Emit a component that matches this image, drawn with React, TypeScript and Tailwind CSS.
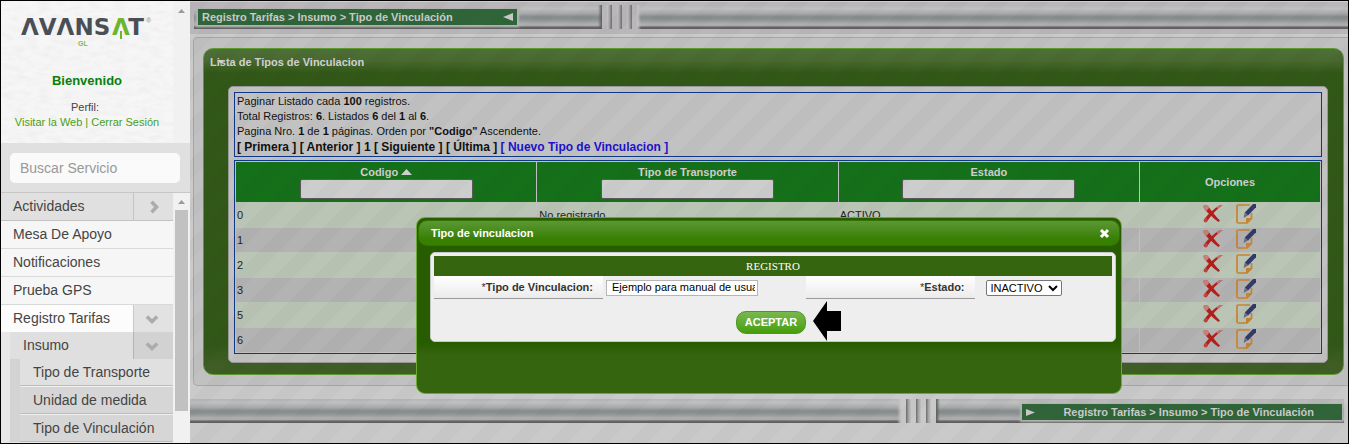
import { useState } from "react";

const CRUMB = "Registro Tarifas > Insumo > Tipo de Vinculación";

const ROWS = [
  { code: "0", name: "No registrado", state: "ACTIVO" },
  { code: "1", name: "", state: "" },
  { code: "2", name: "", state: "" },
  { code: "3", name: "", state: "" },
  { code: "5", name: "", state: "" },
  { code: "6", name: "", state: "" },
];

const METAL =
  "bg-[linear-gradient(to_bottom,#b6b6b8_0%,#c0c0c0_15%,#a8a9aa_35%,#868b8c_50%,#8f9394_62%,#adadad_78%,#b0b0b0_85%,#6a6a6a_92%,#5c5c5c_100%)]";

function Logo() {
  return (
    <svg className="overflow-visible" width="136" height="44" viewBox="0 0 136 44" role="img" aria-label="Avansat GL">
      <g fontFamily="'DejaVu Sans', Inter, sans-serif" fontSize="23" fontWeight="700">
        <text x="2" y="30" fill="#4a4f57">
          ΛVΛNS
        </text>
        <text x="102" y="30" textAnchor="middle" fill="#6cb52d">
          Λ
        </text>
        <text x="117" y="30" textAnchor="middle" fill="#4a4f57">
          T
        </text>
      </g>
      <rect x="101" y="26" width="2" height="8" fill="#6cb52d" />
      <text x="127" y="18" fontSize="7" fontWeight="700" fontFamily="'Liberation Sans', sans-serif" fill="#a5a5a5">
        ®
      </text>
      <text x="59" y="41" fontSize="7" fontWeight="700" fontFamily="'Liberation Sans', sans-serif" fill="#7dbd45">
        GL
      </text>
    </svg>
  );
}

function ScrollArrow() {
  return (
    <svg width="7" height="4" viewBox="0 0 7 4" aria-hidden="true">
      <path d="M3.5 0 7 4H0z" fill="#9a9a9a" />
    </svg>
  );
}

function Chevron({ down = false }: { down?: boolean }) {
  return (
    <svg width="14" height="14" viewBox="0 0 14 14" aria-hidden="true">
      <path
        d={down ? "M1.8 4.5 7 9.5l5.200-5" : "M4.500 1.800 9.500 7l-5 5.200"}
        fill="none"
        stroke="#acacac"
        strokeWidth="3.600"
      />
    </svg>
  );
}

function DeleteIcon() {
  return (
    <svg width="20" height="20" viewBox="0 0 20 20" aria-hidden="true">
      <path d="M.5 2.500C1 .8 3.500.6 4.800 2c3.500 4 6.500 9 12.200 14.500L15.400 18C9 13.500 4.500 8.500 1 4.500z" fill="#b3201c" />
      <path d="M.5 2.500C1 .8 3.500.6 4.800 2l1.400 1.700L3.500 7 1 4.500z" fill="#c9827a" />
      <path d="M19.800.9 17 1C11 4.500 4.500 11 1 15.400c-1 2 1 3.400 2.800 2.600C6 14 12.500 6 19.800.9z" fill="#b3201c" />
      <path d="M19.800.9 17 1c-1.200.7-2.400 1.600-3.500 2.500l.9 1.300C16 3.500 17.700 2.300 19.800.9z" fill="#c47a72" />
      <path d="M1 15.400c-1 2 1 3.400 2.800 2.600l1.200-2-1.800-2.600z" fill="#bf453e" />
    </svg>
  );
}

function EditIcon() {
  return (
    <svg width="20" height="20" viewBox="0 0 20 20" aria-hidden="true">
      <path d="M14 1H2.200Q1 1 1 2.200v15.600Q1 19 2.200 19H11l4.500-4.500V9" fill="none" stroke="#c98430" strokeWidth="1.700" />
      <path d="M10 19.500V14h6z" fill="#c98430" />
      <path d="M17 0h3v3.300l-8 8.200L8.800 8.500z" fill="#343a68" />
      <path d="m8.800 8.500 3.200 3L7.500 14z" fill="#6a6d80" />
    </svg>
  );
}

function Ridges() {
  return (
    <div className="flex flex-none gap-[5px] px-[5px]">
      <i className="block w-[5px] bg-[linear-gradient(to_right,#c6c6c6,#a4a4a4_50%,#6c6c6c)]" />
      <i className="block w-[5px] bg-[linear-gradient(to_right,#c6c6c6,#a4a4a4_50%,#6c6c6c)]" />
      <i className="block w-[5px] bg-[linear-gradient(to_right,#c6c6c6,#a4a4a4_50%,#6c6c6c)]" />
    </div>
  );
}

function FooterRidges() {
  return (
    <div className="flex flex-none gap-[5px] px-[5px]">
      <i className="block w-[5px] bg-[linear-gradient(to_right,#6c6c6c,#a4a4a4_50%,#c6c6c6)]" />
      <i className="block w-[5px] bg-[linear-gradient(to_right,#6c6c6c,#a4a4a4_50%,#c6c6c6)]" />
      <i className="block w-[5px] bg-[linear-gradient(to_right,#6c6c6c,#a4a4a4_50%,#c6c6c6)]" />
    </div>
  );
}

function PlainItem({ label }: { label: string }) {
  return (
    <li>
      <a href="#" className="block h-7 border-b border-[#d9d9d9] bg-[#f6f6f6] pl-3 leading-[27px]">
        {label}
      </a>
    </li>
  );
}

function Sidebar() {
  return (
    <aside className="flex w-[189px] flex-none flex-col overflow-hidden text-sm text-[#444]">
      <div className="flex h-[142px] flex-none">
        <div className="relative flex-1 bg-[#f6f6f6] text-center">
          <svg className="absolute inset-0 h-full w-full opacity-15" aria-hidden="true">
            <filter id="paper">
              <feTurbulence type="fractalNoise" baseFrequency="0.08 0.2" numOctaves="3" seed="4" />
              <feColorMatrix values="0 0 0 0 0.6  0 0 0 0 0.6  0 0 0 0 0.6  2.4 0 0 0 -0.9" />
            </filter>
            <rect width="100%" height="100%" filter="url(#paper)" />
          </svg>
          <div className="relative flex flex-col items-center pt-1">
            <Logo />
            <p className="mt-6 text-[13px] leading-4 font-bold text-[#0a7f0a]">Bienvenido</p>
            <p className="mt-[11px] pr-1 text-[11px] leading-[15px]">Perfil:</p>
            <p className="text-[11px] leading-[15px] text-[#4a9f16]">
              <a href="#">Visitar la Web</a> | <a href="#">Cerrar Sesión</a>
            </p>
          </div>
        </div>
        <div className="flex w-[17px] justify-center bg-[#f1f1f1] pt-2">
          <ScrollArrow />
        </div>
      </div>
      <div className="flex-none border-b border-[#c6c6c6] bg-[#e0e0e0] pt-[10px] pr-[10px] pb-[9px] pl-[9px]">
        <input
          type="search"
          aria-label="Buscar Servicio"
          placeholder="Buscar Servicio"
          className="block h-[30px] w-full rounded-[5px] bg-[#fafafa] px-[10px] text-sm placeholder:text-[#999]"
        />
      </div>
      <div className="flex min-h-0 flex-1">
        <ul className="flex-1 overflow-hidden bg-[#e8e8e8]">
          <li className="flex h-7 border-b border-[#c2c2c2] bg-[#e0e0e0]">
            <a href="#" className="flex-1 border-r border-[#c4c4c4] pl-3 leading-[27px]">
              Actividades
            </a>
            <button type="button" aria-label="Abrir Actividades" className="flex w-[39px] items-center justify-center">
              <Chevron />
            </button>
          </li>
          <PlainItem label="Mesa De Apoyo" />
          <PlainItem label="Notificaciones" />
          <PlainItem label="Prueba GPS" />
          <li>
            <div className="flex h-[27px] bg-[#fcfcfc]">
              <a href="#" className="flex-1 pl-3 leading-[27px]">
                Registro Tarifas
              </a>
              <button
                type="button"
                aria-label="Cerrar Registro Tarifas"
                className="flex w-10 items-center justify-center border-l border-[#c9c9c9] bg-[#e2e2e2] pr-1"
              >
                <Chevron down />
              </button>
            </div>
            <ul className="pl-[9px]">
              <li>
                <div className="flex h-[27px] bg-[#dfdfdf]">
                  <a href="#" className="flex-1 pl-[13px] leading-[27px]">
                    Insumo
                  </a>
                  <button
                    type="button"
                    aria-label="Cerrar Insumo"
                    className="flex w-10 items-center justify-center border-l border-[#b5b5b5] bg-[#d2d2d2] pr-1"
                  >
                    <Chevron down />
                  </button>
                </div>
                <ul className="bg-[#d3d3d3] pl-[10px]">
                  <li className="h-[27px] border-b border-[#bdbdbd] bg-[#e0e0e0] pl-[13px] leading-[26px]">
                    <a href="#">Tipo de Transporte</a>
                  </li>
                  <li className="h-7 border-t border-b border-t-[#efefef] border-b-[#bdbdbd] bg-[#d6d6d6] pl-[13px] leading-[26px]">
                    <a href="#">Unidad de medida</a>
                  </li>
                  <li className="h-7 border-t border-b border-t-[#efefef] border-b-[#bdbdbd] bg-[#d6d6d6] pl-[13px] leading-[26px]">
                    <a href="#">Tipo de Vinculación</a>
                  </li>
                </ul>
              </li>
            </ul>
          </li>
        </ul>
        <div className="flex w-[17px] flex-none flex-col items-center bg-[#f1f1f1] pt-[7px]">
          <ScrollArrow />
          <div className="mt-[6px] h-[201px] w-[13px] bg-[#c1c1c1]" />
        </div>
      </div>
    </aside>
  );
}

function HeadCell({ label, sorted = false }: { label: string; sorted?: boolean }) {
  return (
    <th className="h-10 border-r border-[#c1c1c1] p-0 font-bold">
      <div className="flex flex-col items-center">
        <span className="flex items-center gap-[3px] leading-[14px]">
          {label}
          {sorted && (
            <svg width="11" height="6" viewBox="0 0 11 6" aria-hidden="true">
              <path d="M5.500 0 11 6H0z" fill="#cfcfcf" />
            </svg>
          )}
        </span>
        <input
          type="text"
          aria-label={label}
          className="h-5 w-[173px] rounded-[2px] border border-[#5a5a5a] bg-[#cdcdcd] px-1 text-black"
        />
      </div>
    </th>
  );
}

function ListTable() {
  return (
    <div className="mt-[3px] border border-[#0f378a] p-px">
      <table className="w-full table-fixed border-separate border-spacing-0 text-left">
        <colgroup>
          <col className="w-[27.8%]" />
          <col className="w-[27.8%]" />
          <col className="w-[27.8%]" />
          <col />
        </colgroup>
        <thead className="bg-[#15701a] text-[#cfcfcf]">
          <tr>
            <HeadCell label="Codigo" sorted />
            <HeadCell label="Tipo de Transporte" />
            <HeadCell label="Estado" />
            <th className="p-0 text-center font-bold">Opciones</th>
          </tr>
        </thead>
        <tbody className="text-[#222]">
          {ROWS.map((row, i) => (
            <tr key={row.code} className={i % 2 ? "h-6 bg-[#b3b3b3]" : "h-[26px] bg-[#bbc5b5]"}>
              <td className="border-r border-[#c1c1c1] p-0 pl-px">{row.code}</td>
              <td className="border-r border-[#c1c1c1] p-0 pl-[2px]">{row.name}</td>
              <td className="border-r border-[#c1c1c1] p-0 pl-px">{row.state}</td>
              <td className="p-0 pr-[2px] pb-[2px]">
                <div className="flex justify-center gap-[13px]">
                  <button type="button" aria-label={`Eliminar ${row.code}`}>
                    <DeleteIcon />
                  </button>
                  <button type="button" aria-label={`Editar ${row.code}`}>
                    <EditIcon />
                  </button>
                </div>
              </td>
            </tr>
          ))}
        </tbody>
      </table>
    </div>
  );
}

function RecordDialog() {
  const [name, setName] = useState("Ejemplo para manual de usuario");
  const [state, setState] = useState("INACTIVO");
  const labelCell =
    "h-[23px] w-[169px] border-b border-[#999] bg-linear-to-b from-white to-[#ebebeb] pr-[10px] text-right leading-[22px] font-bold text-[#333]";
  return (
    <div
      role="dialog"
      aria-label="Tipo de vinculacion"
      className="flex h-[177px] w-[706px] max-w-full flex-col rounded-[9px] border border-[#6dab2f] bg-[linear-gradient(to_bottom,#285c00_0,#285c00_125px,#35660f_138px)] px-px pt-[2px]"
    >
      <div className="flex h-[26px] items-center justify-between rounded-[9px] border border-[#337303] bg-linear-to-b from-[#5c9732] to-[#388000] to-75% pr-[9px] pl-3 font-bold text-white">
        <span>Tipo de vinculacion</span>
        <button type="button" aria-label="Cerrar">
          <svg width="11" height="11" viewBox="0 0 11 11" aria-hidden="true">
            <path d="m2 2 7 7M9 2 2 9" stroke="#fff" strokeWidth="3" />
          </svg>
        </button>
      </div>
      <form
        className="mx-3 mt-[6px] mr-1 h-[90px] rounded-[5px] border border-[#c8c8c8] bg-[#eee] p-[3px]"
        onSubmit={(e) => e.preventDefault()}
      >
        <h2 className="h-5 bg-[#35660f] text-center font-['Liberation_Serif',serif] text-[11px] leading-5 text-white">
          REGISTRO
        </h2>
        <div className="grid grid-cols-[54.8%_45.2%]">
          <div className="flex items-center">
            <label htmlFor="tipo" className={labelCell}>
              <span className="font-normal">*</span>Tipo de Vinculacion:
            </label>
            <input
              id="tipo"
              value={name}
              onChange={(e) => setName(e.target.value)}
              className="ml-[3px] h-4 w-[152px] border border-[#b5b5b5] bg-white px-[5px] pr-[2px] text-[11px] text-black"
            />
          </div>
          <div className="flex items-center">
            <label htmlFor="estado" className={labelCell}>
              <span className="font-normal">*</span>Estado:
            </label>
            <select
              id="estado"
              value={state}
              onChange={(e) => setState(e.target.value)}
              className="ml-[11px] h-4 w-[76px] rounded-[2px] border border-[#767676] bg-white text-[11px] leading-[14px] text-black"
            >
              <option>INACTIVO</option>
              <option>ACTIVO</option>
            </select>
          </div>
        </div>
        <div className="mt-3 flex justify-center pr-1">
          <div className="relative">
            <button
              type="submit"
              className="h-[23px] w-[70px] rounded-[10px] border border-[#4a9a1e] bg-linear-to-b from-[#79b84d] to-[#459e00] font-bold text-white"
            >
              ACEPTAR
            </button>
            <svg
              className="absolute -top-[10px] left-[77px]"
              width="28"
              height="40"
              viewBox="0 0 28 40"
              aria-hidden="true"
            >
              <path d="M0 20 14 0v10h14v20H14v10z" fill="#000" />
            </svg>
          </div>
        </div>
      </form>
    </div>
  );
}

export default function App() {
  return (
    <div className="flex h-screen overflow-hidden border border-black bg-[#cacaca] font-['Liberation_Sans',Arial,sans-serif] text-[11px]">
      <Sidebar />
      <div className="relative min-w-0 flex-1 overflow-hidden">
        <header className="border-t border-[#d0d0d0] bg-[#b9b7ba] pt-[3px] pb-[5px] pl-1">
          <div className="flex h-6">
            <div className={`flex w-[408px] flex-none justify-between ${METAL}`}>
              <nav className="mt-1 ml-1 flex h-4 w-[319px] items-center justify-between bg-[#306539] pr-1 pl-1 font-bold text-[#cbcbcb] shadow-[0_0_2px_2px_#b5b5b5]">
                <a href="#">{CRUMB}</a>
                <svg width="10" height="8" viewBox="0 0 10 8" aria-hidden="true">
                  <path d="M10 0v8L0 4z" fill="#cbcbcb" />
                </svg>
              </nav>
              <i className="block w-1 bg-linear-to-r from-transparent to-[#5c5c5c]" />
            </div>
            <Ridges />
            <div className={`flex-1 ${METAL}`}>
              <i className="block h-full w-1 bg-linear-to-r from-[#c6c6c6] to-transparent" />
            </div>
          </div>
        </header>

        <main className="mt-[3px] ml-[3px] rounded-l-[5px] border border-r-0 border-[#a6a6a6] bg-[#c1c1c1] py-[10px] pr-1 pl-[9px]">
          <section className="rounded-[10px] border border-[#5f9a30] bg-[linear-gradient(to_bottom,#4e6f38_0,#48692f_12px,#325818_24px,#325818_calc(100%_-_30px),#3e5e25_calc(100%_-_10px))] px-[15px] pb-[11px] pl-6">
            <h1 className="relative -ml-[18px] h-[37px] pt-[6px] leading-[15px] font-bold text-[#d2d2d2]">
              Lista de Tipos de Vinculacion
              <svg className="absolute top-[11px] left-[7px]" width="8" height="4" viewBox="0 0 8 4" aria-hidden="true">
                <path d="M0 0h8L4 4z" fill="#d2d2d2" />
              </svg>
            </h1>
            <div className="rounded-[5px] border border-[#9a9a9a] bg-[#c2c2c2] px-[5px] pt-[5px] pb-2">
              <div className="h-[65px] border border-[#0f378a] px-[2px] pt-px leading-[15px] text-[#111]">
                <p>
                  Paginar Listado cada <b>100</b> registros.
                </p>
                <p>
                  Total Registros: <b>6</b>. Listados <b>6</b> del <b>1</b> al <b>6</b>.
                </p>
                <p>
                  Pagina Nro. <b>1</b> de <b>1</b> páginas. Orden por <b>"Codigo"</b> Ascendente.
                </p>
                <p className="text-xs leading-4 font-bold">
                  [ Primera ] [ Anterior ] 1 [ Siguiente ] [ Última ]{" "}
                  <a href="#" className="text-[#1d12cc]">
                    [ Nuevo Tipo de Vinculacion ]
                  </a>
                </p>
              </div>
              <ListTable />
            </div>
          </section>
        </main>

        <footer className="mt-[13px] flex h-6 pr-1">
          <div className={`flex flex-1 justify-end ${METAL}`}>
            <i className="block w-1 bg-linear-to-r from-transparent to-[#c6c6c6]" />
          </div>
          <FooterRidges />
          <div className={`flex w-[408px] flex-none justify-between ${METAL}`}>
            <i className="block w-1 bg-linear-to-r from-[#5c5c5c] to-transparent" />
            <nav className="mt-[5px] mr-[2px] flex h-4 w-[320px] items-center justify-between bg-[#306539] pr-7 pl-1 font-bold text-[#cbcbcb] shadow-[0_0_2px_2px_#b5b5b5]">
              <svg width="9" height="7" viewBox="0 0 9 7" aria-hidden="true">
                <path d="M0 0v7l9-3.500z" fill="#cbcbcb" />
              </svg>
              <a href="#">{CRUMB}</a>
            </nav>
          </div>
        </footer>

        <div className="pointer-events-none absolute inset-0 bg-[linear-gradient(135deg,rgba(0,0,0,0.02)_25%,transparent_25%,transparent_50%,rgba(0,0,0,0.02)_50%,rgba(0,0,0,0.02)_75%,transparent_75%)] bg-size-[40px_40px]" />
        <div className="absolute inset-0 flex items-start justify-center pt-[216px]">
          <RecordDialog />
        </div>
      </div>
    </div>
  );
}
